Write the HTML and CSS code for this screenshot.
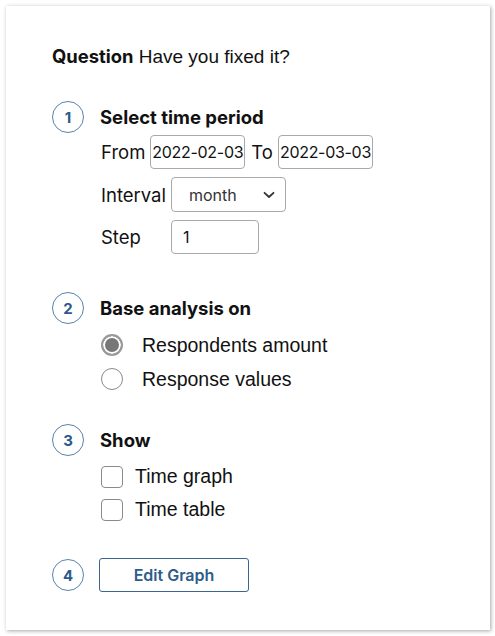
FILE: index.html
```html
<!DOCTYPE html>
<html>
<head>
<meta charset="utf-8">
<link rel="stylesheet" href="styles.css">
</head>
<body>
<div class="card">
  <p class="question"><b class="q-label">Question</b> Have you fixed it?</p>

  <section class="step step-1">
    <span class="num">1</span>
    <div class="body">
      <h2 class="title">Select time period</h2>
      <div class="rows">
        <div class="row">
          <span class="lbl">From</span>
          <span class="field date">2022-02-03</span>
          <span class="lbl">To</span>
          <span class="field date">2022-03-03</span>
        </div>
        <div class="row grid-row">
          <span class="lbl">Interval</span>
          <span class="field select">month
            <svg class="chev" width="12" height="8" viewBox="0 0 12 8"><path d="M1.5 1.8 L6 6 L10.5 1.8" fill="none" stroke="#333" stroke-width="1.8" stroke-linecap="round" stroke-linejoin="round"/></svg>
          </span>
        </div>
        <div class="row grid-row">
          <span class="lbl">Step</span>
          <span class="field step-in">1</span>
        </div>
      </div>
    </div>
  </section>

  <section class="step step-2">
    <span class="num">2</span>
    <div class="body">
      <h2 class="title">Base analysis on</h2>
      <div class="opts">
        <div class="opt"><span class="radio on"></span><span class="opt-text">Respondents amount</span></div>
        <div class="opt"><span class="radio"></span><span class="opt-text">Response values</span></div>
      </div>
    </div>
  </section>

  <section class="step step-3">
    <span class="num">3</span>
    <div class="body">
      <h2 class="title">Show</h2>
      <div class="opts">
        <div class="opt chk-opt"><span class="check"></span><span class="opt-text">Time graph</span></div>
        <div class="opt chk-opt"><span class="check"></span><span class="opt-text">Time table</span></div>
      </div>
    </div>
  </section>

  <section class="step step-4">
    <span class="num">4</span>
    <div class="body">
      <button class="btn">Edit Graph</button>
    </div>
  </section>
</div>
</body>
</html>
```

FILE: styles.css
```css
html, body {
  margin: 0;
  padding: 0;
  background: #fff;
}
body {
  padding: 6px;
  font-family: "Liberation Sans", Arial, sans-serif;
  color: #111;
}
.card {
  width: 484px;
  height: 624px;
  box-sizing: border-box;
  padding: 38px 0 0 46px;
  background: #fff;
  box-shadow: 1px 1px 4px rgba(0,0,0,0.35);
}
.question {
  margin: 0;
  font-size: 19px;
  line-height: 24px;
}
.q-label {
  font-family: Inter, "Noto Sans", sans-serif;
  font-weight: 700;
  font-size: 18.4px;
}
.step {
  display: grid;
  grid-template-columns: 32px 1fr;
  column-gap: 16px;
  align-items: start;
}
.step-1 { margin-top: 32px; }
.step-2 { margin-top: 38px; }
.step-3 { margin-top: 28px; }
.step-4 { margin-top: 32px; align-items: center; }
.num {
  width: 32px;
  height: 32px;
  box-sizing: border-box;
  border: 1px solid #5a83ad;
  border-radius: 50%;
  display: flex;
  align-items: center;
  justify-content: center;
  font-family: Inter, "Noto Sans", sans-serif;
  font-weight: 700;
  font-size: 15px;
  color: #2b5a8a;
}
.title {
  margin: 0;
  height: 32px;
  line-height: 32px;
  font-family: Inter, "Noto Sans", sans-serif;
  font-weight: 700;
  font-size: 18.5px;
  color: #111;
}
.rows {
  display: flex;
  flex-direction: column;
  gap: 8px;
  margin-top: 2px;
}
.row {
  display: flex;
  align-items: center;
  gap: 5px;
  font-family: Inter, "Noto Sans", sans-serif;
  font-size: 18.5px;
}
.grid-row {
  display: grid;
  grid-template-columns: 71px auto;
  column-gap: 0;
  justify-content: start;
}
.lbl {
  padding-left: 1px;
}
.field {
  box-sizing: border-box;
  height: 34px;
  border: 1px solid #a9a9a9;
  border-radius: 4px;
  display: flex;
  align-items: center;
  font-family: Inter, "Noto Sans", sans-serif;
  font-size: 16px;
  color: #111;
}
.date {
  width: 95px;
  padding-left: 1px;
  letter-spacing: -0.3px;
}
.select {
  width: 115px;
  height: 35px;
  padding-left: 17px;
  color: #333;
  justify-content: space-between;
  padding-right: 10px;
}
.step-in {
  width: 88px;
  padding-left: 11px;
}
.opts {
  display: flex;
  flex-direction: column;
  margin-top: 4px;
}
.opt {
  height: 34px;
  display: flex;
  align-items: center;
  font-size: 19.5px;
  color: #111;
}
.chk-opt {
  height: 33px;
}
.radio {
  width: 22px;
  height: 22px;
  box-sizing: border-box;
  border: 1.5px solid #8a8a8a;
  border-radius: 50%;
  margin-left: 1px;
  margin-right: 19px;
}
.radio.on {
  border: 2px solid #9a9a9a;
  background: #777;
  box-shadow: inset 0 0 0 2px #fff;
}
.check {
  width: 22px;
  height: 22px;
  box-sizing: border-box;
  border: 1.5px solid #8a8a8a;
  border-radius: 4px;
  margin-left: 1px;
  margin-right: 12px;
}
.btn {
  width: 150px;
  height: 34px;
  margin-left: -1px;
  background: #fff;
  border: 1px solid #3a6690;
  border-radius: 3px;
  font-family: Inter, "Noto Sans", sans-serif;
  font-weight: 600;
  font-size: 16px;
  color: #2d5d8c;
  padding: 0;
}
```
